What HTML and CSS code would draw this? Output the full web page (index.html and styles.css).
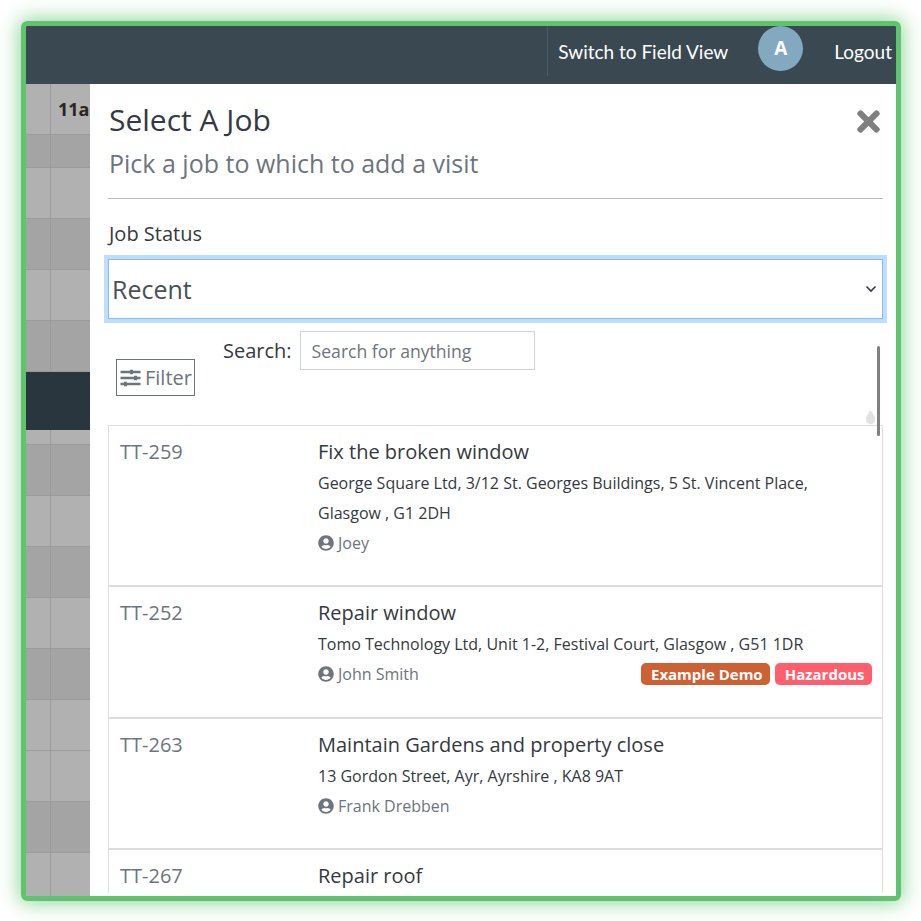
FILE: index.html
```html
<!DOCTYPE html>
<html lang="en">
<head>
<meta charset="utf-8">
<title>Select A Job</title>
<link rel="stylesheet" href="styles.css">
</head>
<body>
<div class="frame">
  <header class="topbar">
    <a class="switch">Switch to Field View</a>
    <span class="avatar">A</span>
    <a class="logout">Logout</a>
  </header>
  <main class="stage">
    <div class="calendar">
      <div class="row head"><span class="hour"></span><span class="hour label">11am</span></div>
      <div class="row dark short"><span class="hour"></span><span class="hour"></span></div>
      <div class="row"><span class="hour"></span><span class="hour"></span></div>
      <div class="row dark"><span class="hour"></span><span class="hour"></span></div>
      <div class="row"><span class="hour"></span><span class="hour"></span></div>
      <div class="row dark"><span class="hour"></span><span class="hour"></span></div>
      <div class="row navy"><span class="hour"></span><span class="hour"></span></div>
      <div class="row tiny"><span class="hour"></span><span class="hour"></span></div>
      <div class="row dark"><span class="hour"></span><span class="hour"></span></div>
      <div class="row"><span class="hour"></span><span class="hour"></span></div>
      <div class="row dark"><span class="hour"></span><span class="hour"></span></div>
      <div class="row"><span class="hour"></span><span class="hour"></span></div>
      <div class="row dark"><span class="hour"></span><span class="hour"></span></div>
      <div class="row"><span class="hour"></span><span class="hour"></span></div>
      <div class="row"><span class="hour"></span><span class="hour"></span></div>
      <div class="row dark"><span class="hour"></span><span class="hour"></span></div>
      <div class="row"><span class="hour"></span><span class="hour"></span></div>
    </div>
    <section class="drawer">
      <div class="drawer-head">
        <div>
          <h1 class="title">Select A Job</h1>
          <p class="subtitle">Pick a job to which to add a visit</p>
        </div>
        <svg class="close" viewBox="0 0 352 512" aria-hidden="true"><path d="M242.72 256l100.07-100.07c12.28-12.28 12.28-32.19 0-44.48l-22.24-22.24c-12.28-12.28-32.19-12.28-44.48 0L176 189.28 75.93 89.21c-12.28-12.28-32.19-12.28-44.48 0L9.21 111.45c-12.28 12.28-12.28 32.19 0 44.48L109.28 256 9.21 356.07c-12.28 12.28-12.28 32.19 0 44.48l22.24 22.24c12.28 12.28 32.2 12.28 44.48 0L176 322.72l100.07 100.07c12.28 12.28 32.2 12.28 44.48 0l22.24-22.24c12.28-12.28 12.28-32.19 0-44.48L242.72 256z"/></svg>
      </div>
      <hr class="rule">
      <label class="field-label">Job Status</label>
      <div class="select">
        <span>Recent</span>
        <svg class="chevron" viewBox="0 0 12 8" aria-hidden="true"><path d="M1.5 1.5 6 6l4.500-4.500"/></svg>
      </div>
      <div class="toolbar">
        <button class="filter">
          <svg class="sliders" viewBox="0 0 20 18" aria-hidden="true">
            <path class="bars" d="M0 3h20M0 9h20M0 15h20"/>
            <path class="knobs" d="M11 .8v4.400M15 6.800v4.400M5 12.800v4.400"/>
          </svg>
          <span>Filter</span>
        </button>
        <div class="search">
          <span class="search-label">Search:</span>
          <span class="search-input">Search for anything</span>
        </div>
        <svg class="drop" viewBox="0 0 12 16" aria-hidden="true"><path d="M6 0 10.500 7.500C12.500 11 10 16 6 16S-.5 11 1.500 7.500Z"/></svg>
        <span class="scrollbar"></span>
      </div>
      <div class="jobs">
        <article class="job">
          <div class="job-id">TT-259</div>
          <div>
            <div class="job-title">Fix the broken window</div>
            <div class="job-address">George Square Ltd, 3/12 St. Georges Buildings, 5 St. Vincent Place, Glasgow , G1 2DH</div>
            <div class="job-foot">
              <span class="person"><svg class="user" viewBox="0 0 496 512" aria-hidden="true"><path d="M248 8C111 8 0 119 0 256s111 248 248 248 248-111 248-248S385 8 248 8zm0 96c48.600 0 88 39.400 88 88s-39.400 88-88 88-88-39.400-88-88 39.400-88 88-88zm0 344c-58.700 0-111.300-26.600-146.500-68.200 18.800-35.400 55.600-59.800 98.500-59.800 2.400 0 4.800.4 7.100 1.100 13 4.200 26.600 6.900 40.900 6.900 14.300 0 28-2.700 40.900-6.900 2.300-.7 4.700-1.100 7.100-1.100 42.900 0 79.700 24.400 98.500 59.800C359.300 421.400 306.700 448 248 448z"/></svg>Joey</span>
            </div>
          </div>
        </article>
        <article class="job">
          <div class="job-id">TT-252</div>
          <div>
            <div class="job-title">Repair window</div>
            <div class="job-address">Tomo Technology Ltd, Unit 1-2, Festival Court, Glasgow , G51 1DR</div>
            <div class="job-foot">
              <span class="person"><svg class="user" viewBox="0 0 496 512" aria-hidden="true"><path d="M248 8C111 8 0 119 0 256s111 248 248 248 248-111 248-248S385 8 248 8zm0 96c48.600 0 88 39.400 88 88s-39.400 88-88 88-88-39.400-88-88 39.400-88 88-88zm0 344c-58.700 0-111.300-26.600-146.500-68.200 18.800-35.400 55.600-59.800 98.500-59.800 2.400 0 4.800.4 7.100 1.100 13 4.200 26.600 6.900 40.900 6.900 14.300 0 28-2.700 40.900-6.900 2.300-.7 4.700-1.100 7.100-1.100 42.900 0 79.700 24.400 98.500 59.800C359.300 421.400 306.700 448 248 448z"/></svg>John Smith</span>
              <span class="tags"><span class="tag demo">Example Demo</span><span class="tag hazard">Hazardous</span></span>
            </div>
          </div>
        </article>
        <article class="job">
          <div class="job-id">TT-263</div>
          <div>
            <div class="job-title">Maintain Gardens and property close</div>
            <div class="job-address">13 Gordon Street, Ayr, Ayrshire , KA8 9AT</div>
            <div class="job-foot">
              <span class="person"><svg class="user" viewBox="0 0 496 512" aria-hidden="true"><path d="M248 8C111 8 0 119 0 256s111 248 248 248 248-111 248-248S385 8 248 8zm0 96c48.600 0 88 39.400 88 88s-39.400 88-88 88-88-39.400-88-88 39.400-88 88-88zm0 344c-58.700 0-111.300-26.600-146.500-68.200 18.800-35.400 55.600-59.800 98.500-59.800 2.400 0 4.800.4 7.100 1.100 13 4.200 26.600 6.900 40.900 6.900 14.300 0 28-2.700 40.900-6.900 2.300-.7 4.700-1.100 7.100-1.100 42.900 0 79.700 24.400 98.500 59.800C359.300 421.400 306.700 448 248 448z"/></svg>Frank Drebben</span>
            </div>
          </div>
        </article>
        <article class="job">
          <div class="job-id">TT-267</div>
          <div>
            <div class="job-title">Repair roof</div>
          </div>
        </article>
      </div>
    </section>
  </main>
</div>
</body>
</html>
```
FILE: styles.css
```css
* { box-sizing: border-box; }
html, body { margin: 0; padding: 0; background: #fff; }
body { width: 921px; height: 921px; overflow: hidden; font-family: "Open Sans", sans-serif; color: #343a40; }
.frame {
  width: 880px; height: 880px; margin: 21px 0 0 21px;
  border: 5px solid #5fc46d; border-radius: 6px;
  box-shadow: 0 0 20px 2px rgba(95, 196, 109, .7);
  display: flex; flex-direction: column; overflow: hidden;
}
.topbar {
  height: 58px; flex: none; background: #3a4851; color: #fff;
  display: flex; align-items: flex-start; justify-content: flex-end;
  font-family: "Lato", sans-serif; font-size: 19px;
}
.switch { height: 50px; line-height: 52px; padding-left: 10px; border-left: 1px solid #4a5963; margin-right: 30px; }
.avatar {
  width: 45px; height: 45px; border-radius: 50%; background: #83a9c0;
  font: 700 19px/45px "Open Sans", sans-serif; text-align: center; margin-right: 31px;
}
.logout { line-height: 52px; margin-right: 4px; }
.stage { flex: 1; position: relative; overflow: hidden; }
.calendar { height: 100%; overflow: hidden; }
.row { height: 51px; display: flex; background: #b1b1b1; border-bottom: 1px solid #9b9b9b; }
.row.dark { background: #a4a4a4; }
.row.short { height: 33px; }
.row.tiny { height: 15px; }
.row.navy { height: 58px; background: #29363e; border-bottom: 0; }
.row.navy .hour { border-right: 0; }
.hour { width: 25px; border-right: 1px solid #9b9b9b; }
.hour:last-child { flex: 1; border-right: 0; }
.hour.label { padding: 13px 0 0 7px; font-weight: 700; font-size: 18px; line-height: 24px; color: #2b2620; white-space: nowrap; overflow: hidden; }
.drawer {
  position: absolute; left: 64px; top: 0; right: 0; bottom: 0; background: #fff;
  padding: 0 13px 3px 18px; display: flex; flex-direction: column;
}
.drawer-head { display: flex; justify-content: space-between; }
.title { margin: 17px 0 0 1px; font-size: 30px; line-height: 38px; font-weight: 400; color: #343a40; }
.subtitle { margin: 8px 0 0 1px; font-size: 25px; line-height: 33px; color: #6c757d; }
.close { width: 23px; height: 33px; margin: 21px 3px 0 0; fill: #7f7f7f; flex: none; }
.rule { width: 100%; margin: 18px 0 0; border: 0; border-top: 1px solid #bbb; }
.field-label { margin: 21px 0 0 1px; font-size: 20px; line-height: 28px; color: #343a40; }
.select {
  margin-top: 11px; height: 60px; width: 775px; flex: none;
  border: 1px solid #80bdff; box-shadow: 0 0 0 4px rgba(0, 123, 255, .25);
  display: flex; align-items: center; justify-content: space-between;
  padding: 0 5px 0 3px; font-size: 25px; color: #495057; background: #fff;
}
.chevron { width: 12px; height: 8px; fill: none; stroke: #343a40; stroke-width: 1.600; }
.toolbar { height: 106px; flex: none; position: relative; display: flex; align-items: flex-start; }
.filter {
  margin: 40px 0 0 8px; width: 79px; height: 37px; padding: 0 0 0 3px;
  background: #fff; border: 1px solid #6c757d; color: #6c757d;
  display: flex; align-items: center; gap: 4px;
  font: 400 20px/27px "Open Sans", sans-serif;
}
.sliders { width: 21px; height: 18px; flex: none; }
.bars { stroke: #6c757d; stroke-width: 2.400; fill: none; }
.knobs { stroke: #6c757d; stroke-width: 3; fill: none; }
.search { margin: 12px 0 0 28px; display: flex; align-items: flex-start; gap: 8px; }
.search-label { font-size: 20px; line-height: 40px; color: #343a40; }
.search-input {
  width: 235px; height: 39px; border: 1px solid #ced4da; padding-left: 11px;
  font-size: 17.600px; line-height: 38px; color: #6c757d;
}
.drop { position: absolute; left: 757px; top: 90px; width: 11px; height: 16px; fill: #e2e2e2; }
.scrollbar { position: absolute; left: 769px; top: 27px; width: 3px; height: 90px; background: #808080; border-radius: 2px; z-index: 1; }
.jobs { flex: 1; min-height: 0; overflow: hidden; width: 775px; }
.job {
  border: 1px solid #ddd; padding: 11px 10px 27.400px 11px;
  display: grid; grid-template-columns: 198px 1fr; background: #fff;
}
.job:last-child { border-bottom: 0; }
.job-id { font-size: 20px; line-height: 30px; color: #6c757d; }
.job-title { font-size: 20px; line-height: 30px; color: #343a40; }
.job-address { font-size: 16px; line-height: 30px; color: #343a40; margin-top: 1px; }
.job-foot { display: flex; justify-content: space-between; align-items: center; height: 30px; }
.person { font-size: 16px; line-height: 30px; color: #6c757d; display: inline-flex; align-items: center; gap: 4px; }
.user { width: 16px; height: 16px; fill: #6c757d; }
.tags { display: flex; gap: 5px; }
.tag { height: 22px; border-radius: 5px; padding: 0 7.500px 0 9.500px; font-size: 15px; font-weight: 700; line-height: 22px; color: #fff; }
.tag.demo { background: #cd6133; }
.tag.hazard { background: #ff5e6c; }
```
